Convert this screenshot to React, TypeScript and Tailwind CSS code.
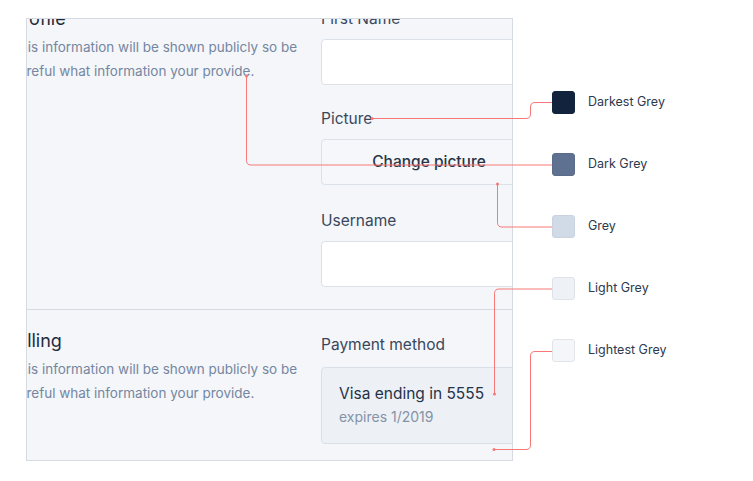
import React from "react";

const SWATCHES = [
  { name: "Darkest Grey", color: "bg-[#12233d]", border: "border-[#12233d]" },
  { name: "Dark Grey", color: "bg-[#5f7190]", border: "border-[#5a6c8a]" },
  { name: "Grey", color: "bg-[#d1dbe7]", border: "border-[#c9d3df]" },
  { name: "Light Grey", color: "bg-[#eef1f5]", border: "border-[#dfe3e9]" },
  { name: "Lightest Grey", color: "bg-[#f4f6fa]", border: "border-[#e1e5ea]" },
];

const FONT = { fontFamily: "Inter, 'Noto Sans', sans-serif" };

export default function App() {
  return (
    <div className="relative h-[481px] w-[753px] overflow-hidden bg-white" style={FONT}>
      <div className="flex">
        <Panel />
        <Legend />
      </div>
      <Connectors />
    </div>
  );
}

function Panel() {
  return (
    <div className="ml-[26px] mt-[18px] flex h-[443px] w-[487px] flex-col overflow-hidden border border-[#d6dbe2] bg-[#f4f6fa]">
      {/* profile */}
      <div className="flex h-[291px] shrink-0 border-b border-[#d6dbe2]">
        <Intro title="Profile" titleTop="-mt-[12px]" />
        <div className="ml-[4px] mt-[-10px] w-[230px] shrink-0">
          <Label>First Name</Label>
          <Input />
          <Label className="mt-[24px]">Picture</Label>
          <div className="mt-[10px] flex h-[46px] w-[216px] items-center justify-center rounded-[4px] border border-[#dbe1e8] bg-[#f5f7fa] text-[15.5px] font-medium text-[#283447]">
            Change picture
          </div>
          <Label className="mt-[26px]">Username</Label>
          <Input />
        </div>
      </div>

      {/* billing */}
      <div className="flex">
        <Intro title="Billing" titleTop="mt-[19px]" />
        <div className="ml-[4px] mt-[25px] w-[230px] shrink-0">
          <Label>Payment method</Label>
          <div className="mt-[12px] h-[77px] w-[230px] rounded-[4px] border border-[#dae0e7] bg-[#edf0f4] pl-[17px] pt-[14px]">
            <p className="text-[15.5px] leading-[24px] text-[#24324a]">Visa ending in 5555</p>
            <p className="mt-[1px] text-[14px] leading-[20px] text-[#8493a8]">expires 1/2019</p>
          </div>
        </div>
      </div>
    </div>
  );
}

function Intro({ title, titleTop }: { title: string; titleTop: string }) {
  return (
    <div className="-ml-[16px] w-[306px] shrink-0">
      <h2 className={`${titleTop} text-[18px] leading-[24px] text-[#1e2b3e]`}>{title}</h2>
      <p className="mt-[5px] text-[13.5px] leading-[23.5px] text-[#7587a0]">
        This information will be shown publicly so be
        <br />
        careful what information your provide.
      </p>
    </div>
  );
}

function Label({ children, className = "" }: { children: React.ReactNode; className?: string }) {
  return <div className={`h-[20px] text-[15.5px] leading-[20px] text-[#3a475a] ${className}`}>{children}</div>;
}

function Input() {
  return <div className="mt-[10px] h-[46px] w-[230px] rounded-[4px] border border-[#dbe1e8] bg-white" />;
}

function Legend() {
  return (
    <div className="ml-[39px] mt-[91px] flex flex-col gap-[39px]">
      {SWATCHES.map((s) => (
        <div key={s.name} className="flex h-[23px] items-center">
          <div className={`h-[23px] w-[23px] rounded-[3px] border ${s.color} ${s.border}`} />
          <span className="ml-[13px] text-[12.5px] text-[#2c3a4d]">{s.name}</span>
        </div>
      ))}
    </div>
  );
}

function Connectors() {
  const c = "#f87878";
  return (
    <svg className="pointer-events-none absolute left-0 top-0" width="753" height="481" fill="none">
      <g stroke={c} strokeWidth="1">
        <path d="M372 118.5 H526 Q530.5 118.5 530.5 114 V107 Q530.5 102.5 535 102.5 H552" />
        <path d="M246.5 76 V160.5 Q246.5 165 251 165 H552" />
        <path d="M497.5 184 V222.5 Q497.5 227 502 227 H552" />
        <path d="M494.5 394 V293.5 Q494.5 289 499 289 H552" />
        <path d="M494 449.5 H526 Q530.5 449.5 530.5 445 V356 Q530.5 351.5 535 351.5 H552" />
      </g>
      <g fill={c}>
        <circle cx="372" cy="118.5" r="1.5" />
        <circle cx="246.5" cy="76" r="1.5" />
        <circle cx="497.5" cy="184" r="1.5" />
        <circle cx="494.5" cy="394" r="1.5" />
        <circle cx="494" cy="449.5" r="1.5" />
      </g>
    </svg>
  );
}
